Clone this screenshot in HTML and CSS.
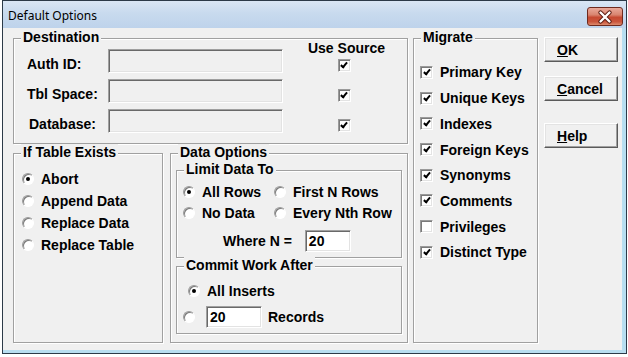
FILE: index.html
```html
<!DOCTYPE html>
<html>
<head>
<meta charset="utf-8">
<title>Default Options</title>
<link rel="stylesheet" href="styles.css">
</head>
<body>
<div class="window">
  <div class="titlebar">
    <span class="title">Default Options</span>
    <span class="close">
      <svg width="16" height="14" viewBox="0 0 16 14">
        <path d="M3.5 2.5 L12.5 11.5 M12.5 2.5 L3.5 11.5" stroke="#5a1a10" stroke-width="4.2" stroke-linecap="round"/>
        <path d="M3.5 2.5 L12.5 11.5 M12.5 2.5 L3.5 11.5" stroke="#ffffff" stroke-width="2.4" stroke-linecap="round"/>
      </svg>
    </span>
  </div>
  <div class="client">
    <div class="left-col">
      <div class="group dest">
        <div class="gtitle">Destination</div>
        <div class="dest-grid">
          <div class="use-src">Use Source</div>
          <div class="lbl row1">Auth ID:</div>
          <div class="field row1"></div>
          <div class="cb on dcb row1"></div>
          <div class="lbl row2">Tbl Space:</div>
          <div class="field row2"></div>
          <div class="cb on dcb row2"></div>
          <div class="lbl row3 db">Database:</div>
          <div class="field row3"></div>
          <div class="cb on dcb row3"></div>
        </div>
      </div>
      <div class="bottom-row">
        <div class="group exists">
          <div class="gtitle">If Table Exists</div>
          <div class="opts">
            <div class="opt"><span class="rb sel"></span><span>Abort</span></div>
            <div class="opt"><span class="rb"></span><span>Append Data</span></div>
            <div class="opt"><span class="rb"></span><span>Replace Data</span></div>
            <div class="opt"><span class="rb"></span><span>Replace Table</span></div>
          </div>
        </div>
        <div class="group dataopt">
          <div class="gtitle">Data Options</div>
          <div class="group limit">
            <div class="gtitle">Limit Data To</div>
            <div class="limit-grid">
              <div class="opt"><span class="rb sel"></span><span>All Rows</span></div>
              <div class="opt"><span class="rb"></span><span>First N Rows</span></div>
              <div class="opt"><span class="rb"></span><span>No Data</span></div>
              <div class="opt"><span class="rb"></span><span>Every Nth Row</span></div>
            </div>
            <div class="where">
              <span>Where N =</span>
              <div class="field white nfield">20</div>
            </div>
          </div>
          <div class="group commit">
            <div class="gtitle">Commit Work After</div>
            <div class="opt c1"><span class="rb sel"></span><span>All Inserts</span></div>
            <div class="opt c2"><span class="rb"></span><div class="field white rfield">20</div><span class="rec">Records</span></div>
          </div>
        </div>
      </div>
    </div>
    <div class="group migrate">
      <div class="gtitle">Migrate</div>
      <div class="mlist">
        <div class="mrow"><span class="cb on"></span><span>Primary Key</span></div>
        <div class="mrow"><span class="cb on"></span><span>Unique Keys</span></div>
        <div class="mrow"><span class="cb on"></span><span>Indexes</span></div>
        <div class="mrow"><span class="cb on"></span><span>Foreign Keys</span></div>
        <div class="mrow"><span class="cb on"></span><span>Synonyms</span></div>
        <div class="mrow"><span class="cb on"></span><span>Comments</span></div>
        <div class="mrow"><span class="cb"></span><span>Privileges</span></div>
        <div class="mrow"><span class="cb on"></span><span>Distinct Type</span></div>
      </div>
    </div>
    <div class="buttons">
      <div class="btn"><span><u>O</u>K</span></div>
      <div class="btn cancel"><span><u>C</u>ancel</span></div>
      <div class="btn help"><span><u>H</u>elp</span></div>
    </div>
  </div>
</div>
</body>
</html>
```

FILE: styles.css
```css
html, body {
  margin: 0;
  padding: 0;
  background: #ffffff;
}

body {
  width: 628px;
  height: 357px;
  overflow: hidden;
  font-family: "Liberation Sans", Arial, sans-serif;
  font-size: 14px;
  font-weight: bold;
  color: #000;
}

.window {
  margin-left: 2px;
  width: 625px;
  height: 354px;
  box-sizing: border-box;
  border: 1px solid #2c3a48;
  background: #b8def0;
  display: flex;
  flex-direction: column;
}

.titlebar {
  height: 27px;
  flex: none;
  display: flex;
  justify-content: space-between;
  align-items: flex-start;
  background: linear-gradient(to bottom, #dae6f4 0%, #c8daee 45%, #bed3eb 100%);
}

.title {
  font-family: "Noto Sans", "Open Sans", sans-serif;
  font-weight: normal;
  font-size: 12px;
  line-height: 16px;
  margin: 7px 0 0 5px;
  color: #000;
}

.close {
  width: 36px;
  height: 19px;
  box-sizing: border-box;
  margin: 6px 3px 0 0;
  border: 1px solid #6e2a1e;
  border-radius: 3px;
  background: linear-gradient(to bottom, #e9a99a 0%, #d98570 40%, #c64a32 55%, #c9553c 80%, #dd8a6c 100%);
  display: flex;
  align-items: center;
  justify-content: center;
}

.client {
  flex: none;
  height: 322px;
  margin-right: 4px;
  background: #f0f0f0;
  box-sizing: border-box;
  padding: 10px 0 0 10px;
  display: flex;
  align-items: flex-start;
}

/* group boxes */
.group {
  box-sizing: border-box;
  border: 1px solid #a0a0a0;
  box-shadow: inset 1px 1px 0 #ffffff, 1px 1px 0 #ffffff;
}

.gtitle {
  width: fit-content;
  margin: -10px 0 -6px 7px;
  padding: 0 2px;
  line-height: 16px;
  background: #f0f0f0;
  white-space: nowrap;
}

.left-col {
  width: 395px;
  flex: none;
}

.dest {
  height: 106px;
}

.dest-grid {
  display: grid;
  grid-template-columns: 81px 175px 17px 90px;
  grid-template-rows: 6px 30px 30px 30px;
  margin: 1px 0 0 13px;
}

.use-src {
  grid-column: 4;
  grid-row: 1 / 3;
  justify-self: center;
  align-self: start;
  line-height: 16px;
  white-space: nowrap;
  margin-left: 3px;
}

.row1 { grid-row: 2; }
.row2 { grid-row: 3; }
.row3 { grid-row: 4; }

.lbl {
  grid-column: 1;
  align-self: start;
  line-height: 16px;
  margin-top: 10px;
  white-space: nowrap;
}

.lbl.db { margin-left: 2px; }

.dest-grid .field {
  grid-column: 2;
  align-self: start;
  margin-top: 3px;
}

.dcb {
  grid-column: 4;
  align-self: start;
  justify-self: center;
  margin-top: 13px;
  margin-right: 2px;
}

/* sunken fields */
.field {
  height: 24px;
  box-sizing: border-box;
  border: 1px solid;
  border-color: #a0a0a0 #ffffff #ffffff #a0a0a0;
  box-shadow: inset 1px 1px 0 #696969, inset -1px -1px 0 #e3e3e3;
  background: #f0f0f0;
}

.field.white {
  background: #ffffff;
  height: 22px;
  line-height: 20px;
  padding-left: 3px;
}

/* checkbox */
.cb {
  width: 13px;
  height: 13px;
  flex: none;
  box-sizing: border-box;
  border: 1px solid;
  border-color: #9a9a9a #ffffff #ffffff #9a9a9a;
  box-shadow: inset 1px 1px 0 #7a7a7a, inset -1px -1px 0 #e3e3e3;
  background: #ffffff;
  display: flex;
  align-items: center;
  justify-content: center;
}

.cb.on::after {
  content: "";
  width: 2px;
  height: 5px;
  border: solid #000;
  border-width: 0 2px 2px 0;
  transform: rotate(40deg);
  margin-top: -2px;
}

/* radio */
.rb {
  width: 12px;
  height: 12px;
  flex: none;
  box-sizing: border-box;
  border-radius: 50%;
  border: 1px solid;
  border-color: #9a9a9a #ffffff #ffffff #9a9a9a;
  box-shadow: inset 1px 1px 0 #7a7a7a;
  background: #ffffff;
  display: flex;
  align-items: center;
  justify-content: center;
}

.rb.sel::after {
  content: "";
  width: 4px;
  height: 4px;
  border-radius: 50%;
  background: #000;
}

.opt {
  display: flex;
  align-items: center;
  gap: 7px;
  white-space: nowrap;
}

.bottom-row {
  display: flex;
  margin-top: 9px;
}

.exists {
  width: 150px;
  height: 190px;
  flex: none;
}

.opts {
  padding: 14px 0 0 8px;
}

.opts .opt {
  height: 22px;
}

.dataopt {
  width: 238px;
  height: 190px;
  flex: none;
  margin-left: 7px;
}

.limit {
  height: 88px;
  margin: 16px 5px 0 5px;
}

.limit-grid {
  display: grid;
  grid-template-columns: 91px 1fr;
  grid-auto-rows: 21px;
  padding: 10px 0 0 6px;
}

.where {
  display: flex;
  align-items: center;
  gap: 13px;
  margin-top: 7px;
  padding-left: 46px;
  white-space: nowrap;
}

.nfield {
  width: 46px;
}

.commit {
  height: 68px;
  margin: 8px 5px 0 5px;
}

.c1 {
  height: 21px;
  margin-top: 13px;
  padding-left: 11px;
}

.c2 {
  height: 22px;
  margin-top: 5px;
  padding-left: 6px;
  gap: 0;
}

.rfield {
  width: 56px;
  margin-left: 11px;
}

.rec {
  margin-left: 6px;
}

.migrate {
  width: 125px;
  height: 305px;
  flex: none;
  margin-left: 5px;
}

.mlist {
  padding: 20.6px 0 0 6px;
}

.mrow {
  height: 25.7px;
  display: flex;
  align-items: center;
  gap: 7px;
  white-space: nowrap;
}

.buttons {
  flex: none;
  margin-left: 6px;
  margin-top: -1px;
  display: flex;
  flex-direction: column;
}

.btn {
  width: 74px;
  height: 25px;
  box-sizing: border-box;
  border: 1px solid;
  border-color: #ffffff #5a5a5a #5a5a5a #ffffff;
  box-shadow: inset -1px -1px 0 #a0a0a0, inset 1px 1px 0 #e3e3e3;
  background: #f0f0f0;
  display: flex;
  align-items: center;
  padding-left: 12px;
}

.btn.cancel { margin-top: 14px; }
.btn.help { margin-top: 22px; }
```
